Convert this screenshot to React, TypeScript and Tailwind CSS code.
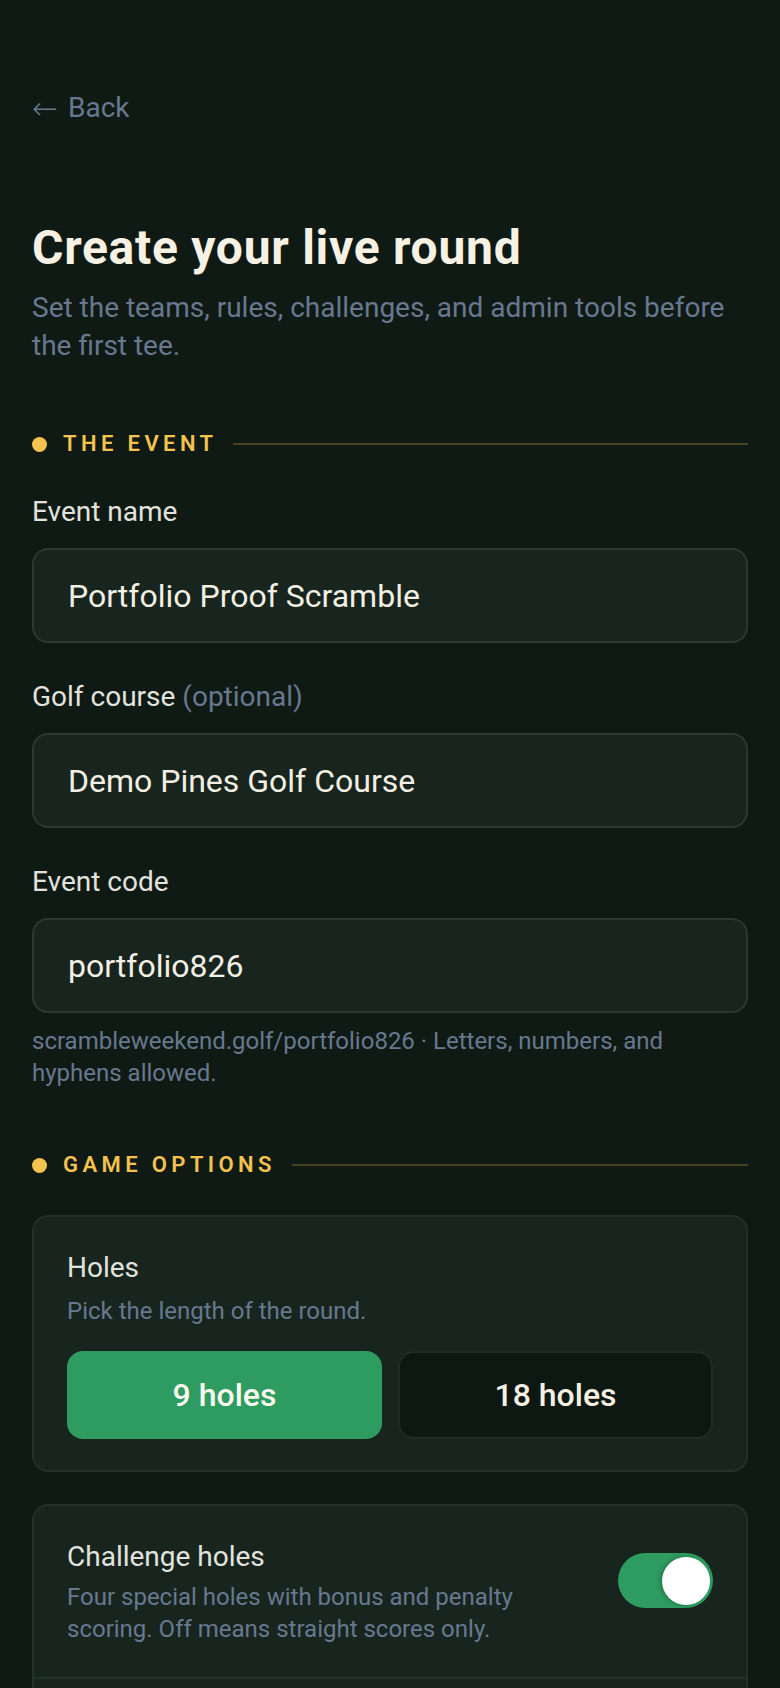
import React from 'react';

const muted = 'text-[#67788f]';

function cn(...parts: (string | false | undefined)[]) {
    return parts.filter(Boolean).join(' ');
}

function SectionHeader({ title }: { title: string }) {
    return (
        <div className="flex h-[28px] items-center gap-4">
            <span className="h-[15px] w-[15px] shrink-0 rounded-full bg-[#f4c24f]" />
            <span className="text-[22px] leading-[28px] font-semibold tracking-[0.2em] text-[#f4c24f]">{title}</span>
            <span className="h-[2px] flex-1 bg-[#47421f]" />
        </div>
    );
}

function Field({ label, hint, value }: { label: string; hint?: string; value: string }) {
    return (
        <div>
            <label className="block text-[28px] leading-[36px] text-[#e3e3de]">
                {label}
                {hint && <span className={muted}> {hint}</span>}
            </label>
            <input
                readOnly
                value={value}
                className="mt-[18px] block h-[95px] w-full rounded-[16px] border-2 border-[#2a3a31] bg-[#17251e] px-[34px] text-[32px] text-[#f3efe3] outline-none"
            />
        </div>
    );
}

function Toggle({ on }: { on: boolean }) {
    return (
        <div className={cn('mt-[14px] flex h-[55px] w-[95px] shrink-0 items-center rounded-full px-[3px]', on ? 'justify-end bg-[#2e9c60]' : 'justify-start bg-[#2a3a31]')}>
            <span className="h-[48px] w-[48px] rounded-full bg-white shadow-[-2px_0_4px_rgba(0,0,0,0.25)]" />
        </div>
    );
}

function ToggleRow({ title, desc, on }: { title: string; desc: string; on: boolean }) {
    return (
        <div className="flex items-start gap-8 border-b-2 border-[#22312a] px-[33px] pt-[33px] pb-[32px]">
            <div className="min-w-0 flex-1">
                <p className="text-[28px] leading-[36px] text-[#e3e3de]">{title}</p>
                <p className={cn('mt-1.5 text-[24px] leading-[32px]', muted)}>{desc}</p>
            </div>
            <Toggle on={on} />
        </div>
    );
}

export default function App() {
    return (
        <div className="min-h-screen bg-[#0f1a14] font-['Roboto','Liberation_Sans',sans-serif]">
            <div className="px-8 pt-[88px] pb-24">
                <a className={cn('flex items-center gap-[10px] text-[28px] leading-[40px]', muted)}>
                    <span className="font-['DejaVu_Sans',sans-serif] text-[31px] leading-[40px] font-extralight">←</span>
                    <span>Back</span>
                </a>

                <h1 className="mt-[93px] text-[48px] leading-[54px] font-bold tracking-[0.015em] text-[#f6f1e3]">Create your live round</h1>
                <p className={cn('mt-[14px] text-[28px] leading-[38px]', muted)}>
                    Set the teams, rules, challenges, and admin tools before the first tee.
                </p>

                <section className="mt-[65px]">
                    <SectionHeader title="THE EVENT" />
                    <div className="mt-9 flex flex-col gap-9">
                        <Field label="Event name" value="Portfolio Proof Scramble" />
                        <Field label="Golf course" hint="(optional)" value="Demo Pines Golf Course" />
                        <Field label="Event code" value="portfolio826" />
                    </div>
                    <p className={cn('mt-3 text-[24px] leading-[32px]', muted)}>
                        scrambleweekend.golf/portfolio826 · Letters, numbers, and hyphens allowed.
                    </p>
                </section>

                <section className="mt-[62px]">
                    <SectionHeader title="GAME OPTIONS" />
                    <div className="mt-9 rounded-[16px] border-2 border-[#22312a] bg-[#17251e] px-[33px] pt-[33px] pb-[31px]">
                        <p className="text-[28px] leading-[36px] text-[#e3e3de]">Holes</p>
                        <p className={cn('mt-[9px] text-[24px] leading-[32px]', muted)}>Pick the length of the round.</p>
                        <div className="mt-6 grid grid-cols-2 gap-4">
                            <button className="h-[88px] rounded-[16px] bg-[#2e9c60] text-[32px] font-medium text-[#fbf8ef]">9 holes</button>
                            <button className="h-[88px] rounded-[16px] border-2 border-[#1f2d25] bg-[#0e1812] text-[32px] font-medium text-[#f6f1e3]">18 holes</button>
                        </div>
                    </div>

                    <div className="mt-8 rounded-[16px] border-2 border-[#22312a] bg-[#17251e]">
                        <ToggleRow
                            title="Challenge holes"
                            desc="Four special holes with bonus and penalty scoring. Off means straight scores only."
                            on
                        />
                        <div className="h-[140px]" />
                    </div>
                </section>
            </div>
        </div>
    );
}
